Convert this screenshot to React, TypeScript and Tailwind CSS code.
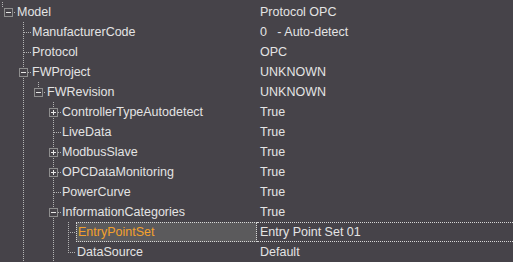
import React from "react";

type Row = {
  label: string;
  value: string;
  level: number;
  box?: "minus" | "plus";
  last?: boolean;
  cont: number[];
  selected?: boolean;
  root?: boolean;
};

const rows: Row[] = [
  { label: "Model", value: "Protocol OPC", level: 0, box: "minus", last: true, cont: [], root: true },
  { label: "ManufacturerCode", value: "0   - Auto-detect", level: 1, cont: [] },
  { label: "Protocol", value: "OPC", level: 1, cont: [] },
  { label: "FWProject", value: "UNKNOWN", level: 1, box: "minus", cont: [] },
  { label: "FWRevision", value: "UNKNOWN", level: 2, box: "minus", last: true, cont: [1] },
  { label: "ControllerTypeAutodetect", value: "True", level: 3, box: "plus", cont: [1] },
  { label: "LiveData", value: "True", level: 3, cont: [1] },
  { label: "ModbusSlave", value: "True", level: 3, box: "plus", cont: [1] },
  { label: "OPCDataMonitoring", value: "True", level: 3, box: "plus", cont: [1] },
  { label: "PowerCurve", value: "True", level: 3, cont: [1] },
  { label: "InformationCategories", value: "True", level: 3, box: "minus", cont: [1] },
  { label: "EntryPointSet", value: "Entry Point Set 01", level: 4, cont: [1, 3], selected: true },
  { label: "DataSource", value: "Default", level: 4, last: true, cont: [1, 3] },
];

const DOT = "#b4b4b4";

function vdots(x: number, y1: number, y2: number, key: string) {
  const out: React.ReactNode[] = [];
  for (let y = y1; y < y2; y++) {
    if (y % 2 === 0) out.push(<rect key={`${key}-${y}`} x={x} y={y} width={1} height={1} fill={DOT} />);
  }
  return out;
}

function hdots(y: number, x1: number, x2: number, key: string) {
  const out: React.ReactNode[] = [];
  for (let x = x1; x < x2; x++) {
    if (x % 2 === 0) out.push(<rect key={`${key}-${x}`} x={x} y={y} width={1} height={1} fill={DOT} />);
  }
  return out;
}

function Guides({ row }: { row: Row }) {
  const w = 15 * row.level + 16;
  const mid = 10;
  const c = 8 + 15 * row.level;
  const parts: React.ReactNode[] = [];
  row.cont.forEach((k) => parts.push(...vdots(8 + 15 * k, 0, 20, `c${k}`)));
  if (row.root) {
    parts.push(...vdots(2, 0, 5, "root"));
  }
  if (row.box) {
    if (!row.root) parts.push(...vdots(c, 0, mid - 4, "up"));
    if (!row.last) parts.push(...vdots(c, mid + 5, 20, "down"));
    parts.push(...hdots(mid, c + 5, c + 8, "h"));
    parts.push(
      <rect key="box" x={c - 3.5} y={mid - 3.5} width={8} height={8} fill="none" stroke="#8e8e8e" strokeWidth={1} />
    );
    parts.push(<rect key="minus" x={c - 2} y={mid} width={5} height={1} fill="#e6e6e6" />);
    if (row.box === "plus") parts.push(<rect key="plus" x={c} y={mid - 2} width={1} height={5} fill="#e6e6e6" />);
  } else {
    parts.push(...vdots(c, 0, row.last ? mid + 1 : 20, "v"));
    parts.push(...hdots(mid, c + 1, c + 8, "h"));
  }
  return (
    <svg width={w} height={20} className="shrink-0" shapeRendering="crispEdges">
      {parts}
    </svg>
  );
}

export default function App() {
  return (
    <div
      className="w-[513px] h-[262px] overflow-hidden bg-[#464349] pt-[2px] text-[#e4e4e4] text-[12.5px] leading-none"
      style={{ fontFamily: '"Liberation Sans", Arial, sans-serif' }}
    >
      {rows.map((row, i) => (
        <div key={i} className="flex h-[20px]">
          <div className="flex w-[257px] shrink-0 items-stretch">
            <Guides row={row} />
            {row.selected ? (
              <div className="flex flex-1 items-center border border-dotted border-[#d6d6d6] bg-[#5b5a5c] pl-[1px] text-[#f3a12d]">
                {row.label}
              </div>
            ) : (
              <div className="flex flex-1 items-center pl-[1px] whitespace-nowrap">{row.label}</div>
            )}
          </div>
          <div
            className={
              row.selected
                ? "flex flex-1 items-center border-y border-dotted border-[#d6d6d6] pl-[3px] whitespace-pre"
                : "flex flex-1 items-center pl-[3px] whitespace-pre"
            }
          >
            {row.value}
          </div>
        </div>
      ))}
    </div>
  );
}
